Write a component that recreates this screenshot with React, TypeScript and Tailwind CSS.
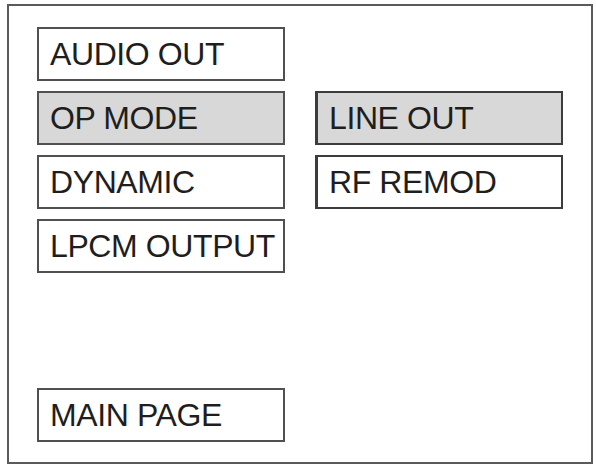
import React from "react";

function Item({ label, selected = false, strong = false }: { label: string; selected?: boolean; strong?: boolean }) {
  return (
    <div
      className={
        "flex h-[54px] w-[248px] items-center pl-[11px] text-[32px] leading-none tracking-[-0.4px] text-[#1e1e1e] " +
        (selected ? "bg-[#d8d8d8] " : "bg-white ") +
        (strong
          ? "border-y-2 border-r-2 border-l-[3px] border-[#3c3c3c]"
          : "border-2 border-[#505050]")
      }
    >
      {label}
    </div>
  );
}

export default function App() {
  return (
    <div
      className="h-[465px] w-[596px] bg-white pl-[7px] pt-[4px]"
      style={{ fontFamily: '"Liberation Sans", Arial, sans-serif' }}
    >
      <div className="flex h-[460px] w-[586px] gap-[30px] border-2 border-[#5a5a5a] pb-[20px] pl-[28px] pt-[21px]">
        <div className="flex flex-col gap-[10px]">
          <Item label="AUDIO OUT" />
          <Item label="OP MODE" selected />
          <Item label="DYNAMIC" />
          <Item label="LPCM OUTPUT" />
          <div className="mt-auto">
            <Item label="MAIN PAGE" />
          </div>
        </div>
        <div className="mt-[64px] flex flex-col gap-[10px]">
          <Item label="LINE OUT" selected strong />
          <Item label="RF REMOD" strong />
        </div>
      </div>
    </div>
  );
}
